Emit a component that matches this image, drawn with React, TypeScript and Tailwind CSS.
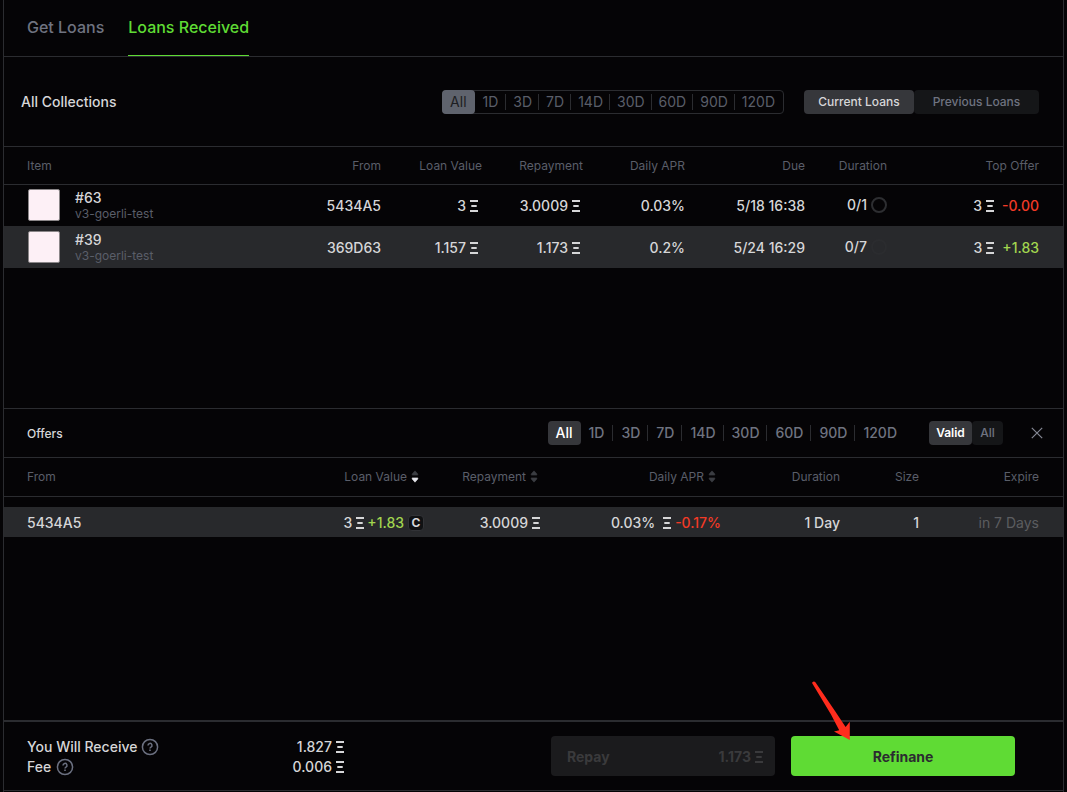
import React from 'react';
import { clsx } from 'clsx';

const PERIODS = ['All', '1D', '3D', '7D', '14D', '30D', '60D', '90D', '120D'];

function Eth() {
  return (
    <svg width="8" height="12" viewBox="0 0 8 12" fill="currentColor" role="img" aria-label="ETH" className="shrink-0">
      <path d="M0 0h8v2H0zM1.3 5h5.4v2H1.3zM0 10h8v2H0z" />
    </svg>
  );
}

function SortIcon({ desc = false }: { desc?: boolean }) {
  return (
    <svg width="8" height="13" viewBox="0 0 8 13" aria-hidden="true" className="shrink-0">
      <path d="M4 0.8 6.8 4v1.1H1.2V4z" fill="#3b3d42" stroke="#3b3d42" strokeWidth="0.6" strokeLinejoin="round" />
      <path
        d="M4 12.2 6.8 9V7.9H1.2V9z"
        fill={desc ? '#e4e4ea' : '#3b3d42'}
        stroke={desc ? '#e4e4ea' : '#3b3d42'}
        strokeWidth="0.6"
        strokeLinejoin="round"
      />
    </svg>
  );
}

function HelpIcon() {
  return (
    <svg width="18" height="18" viewBox="0 0 18 18" fill="none" stroke="#6b7080" aria-hidden="true">
      <circle cx="9" cy="9" r="7.6" strokeWidth="1.5" />
      <path d="M7 7.4a2 2 0 1 1 3 1.7c-.7.4-1 .7-1 1.4" strokeWidth="1.5" />
      <path d="M9 11.6v1.5" strokeWidth="1.6" />
    </svg>
  );
}

function Amount({ value }: { value: string }) {
  return (
    <span className="inline-flex items-center gap-1">
      {value}
      <Eth />
    </span>
  );
}

function SortHeader({ label, desc }: { label: string; desc?: boolean }) {
  return (
    <button type="button" className="inline-flex items-center gap-1">
      {label}
      <SortIcon desc={desc} />
    </button>
  );
}

function OutlinedPeriods() {
  return (
    <div role="group" aria-label="Loan period" className="flex h-6 items-center rounded border border-[#2b2c30] text-sm text-[#5a5e69]">
      {PERIODS.map((p, i) => (
        <button
          key={p}
          type="button"
          className={clsx(
            'flex items-center',
            i === 0 && '-my-px -ml-px h-6 rounded bg-[#5f636d] px-2 text-[#1d1e22]',
            i === 1 && 'h-4 pr-[7px] pl-2',
            i > 1 && 'h-4 border-l border-[#2b2c30] pl-[7px]',
            i > 1 && (p === '120D' ? 'pr-2' : 'pr-[6px]'),
          )}
        >
          {p}
        </button>
      ))}
    </div>
  );
}

function PlainPeriods() {
  return (
    <div role="group" aria-label="Offer period" className="flex h-6 items-center text-sm font-medium text-[#6f7380]">
      {PERIODS.map((p, i) => (
        <button
          key={p}
          type="button"
          className={clsx(
            'flex items-center pl-2',
            i === 0 && 'h-6 rounded bg-[#36373b] pr-2 text-white',
            i === 1 && 'h-4 pr-2',
            i > 1 && 'h-4 border-l border-[#2b2c30]',
            i > 1 && (p === '120D' ? 'pr-2' : 'pr-[7px]'),
          )}
        >
          {p}
        </button>
      ))}
    </div>
  );
}

const LOANS = [
  { id: '#63', from: '5434A5', value: '3', repay: '3.0009', apr: '0.03%', due: '5/18 16:38', dur: '0/1', top: '3', diff: '-0.00', up: false, selected: false },
  { id: '#39', from: '369D63', value: '1.157', repay: '1.173', apr: '0.2%', due: '5/24 16:29', dur: '0/7', top: '3', diff: '+1.83', up: true, selected: true },
];

function LoansTable() {
  return (
    <table className="w-full table-fixed text-right">
      <colgroup>
        <col />
        <col className="w-[100px]" />
        <col className="w-[101px]" />
        <col className="w-[101px]" />
        <col className="w-[102px]" />
        <col className="w-[120px]" />
        <col className="w-[82px]" />
        <col className="w-[176px]" />
      </colgroup>
      <thead className="border-b border-[#2b2c30] text-xs text-[#5a5e69]">
        <tr className="h-[37px] *:pt-[2px]">
          <th className="pl-[23px] text-left font-normal">Item</th>
          <th className="font-normal">From</th>
          <th className="font-normal">Loan Value</th>
          <th className="font-normal">Repayment</th>
          <th className="font-normal">Daily APR</th>
          <th className="font-normal">Due</th>
          <th className="font-normal">Duration</th>
          <th className="pr-6 font-normal">Top Offer</th>
        </tr>
      </thead>
      <tbody className="text-sm font-medium text-[#d6d6d8]">
        {LOANS.map((l) => (
          <tr key={l.id} className={clsx('h-[42px]', l.selected && 'bg-[#28292c]')}>
            <td className="pl-6 text-left">
              <div className="flex items-center gap-[15px]">
                <div className="size-8 rounded-xs border border-[#8a8688] bg-[#fdf0f6]" />
                <div className="pt-[2px]">
                  <div className="leading-4">{l.id}</div>
                  <div className="text-xs leading-4 font-normal text-[#5a5e69]">v3-goerli-test</div>
                </div>
              </div>
            </td>
            <td className="pt-[2px]">{l.from}</td>
            <td className="pt-[2px] pr-1"><Amount value={l.value} /></td>
            <td className="pt-[2px] pr-[3px]"><Amount value={l.repay} /></td>
            <td className="pt-[2px]">{l.apr}</td>
            <td className="pt-[2px]">{l.due}</td>
            <td>
              <div className="flex items-center justify-end gap-1">
                {l.dur}
                <span className={clsx('size-4 rounded-full border-2', l.selected ? 'border-[#2b2c2f]' : 'border-[#2d2e31]')} />
              </div>
            </td>
            <td className="pt-[2px] pr-6">
              <div className="flex items-center justify-end gap-2">
                <Amount value={l.top} />
                <span className={l.up ? 'text-[#a2d64f]' : 'text-[#f23a26]'}>{l.diff}</span>
              </div>
            </td>
          </tr>
        ))}
      </tbody>
    </table>
  );
}

function OffersTable() {
  return (
    <table className="w-full table-fixed text-right">
      <colgroup>
        <col />
        <col className="w-[200px]" />
        <col className="w-[116px]" />
        <col className="w-[181px]" />
        <col className="w-[119px]" />
        <col className="w-[79px]" />
        <col className="w-[144px]" />
      </colgroup>
      <thead className="border-b border-[#2b2c30] text-xs text-[#5a5e69]">
        <tr className="h-[38px]">
          <th className="pl-[23px] text-left font-normal">From</th>
          <th className="pr-[5px] font-normal"><SortHeader label="Loan Value" desc /></th>
          <th className="pr-[2px] font-normal"><SortHeader label="Repayment" /></th>
          <th className="pr-[5px] font-normal"><SortHeader label="Daily APR" /></th>
          <th className="font-normal">Duration</th>
          <th className="font-normal">Size</th>
          <th className="pr-6 font-normal">Expire</th>
        </tr>
      </thead>
      <tbody className="text-sm font-medium text-[#d6d6d8] before:block before:h-[10px] before:content-['']">
        <tr className="h-[30px] bg-[#28292c] *:pt-[2px]">
          <td className="pl-[23px] text-left">5434A5</td>
          <td>
            <div className="flex items-center justify-end gap-1">
              <span className="flex items-center gap-[3px]">
                <Amount value="3" />
                <span className="text-[#a2d64f]">+1.83</span>
              </span>
              <span className="flex size-4 items-center justify-center rounded border border-[#323337] bg-[#101113] text-xs font-bold">C</span>
            </div>
          </td>
          <td><Amount value="3.0009" /></td>
          <td>
            <div className="flex items-center justify-end gap-1">
              <span className="pr-1">0.03%</span>
              <Eth />
              <span className="text-[#f23a26]">-0.17%</span>
            </div>
          </td>
          <td>1 Day</td>
          <td>1</td>
          <td className="pr-6 font-normal text-[#5c5d60]">in 7 Days</td>
        </tr>
      </tbody>
    </table>
  );
}

export default function App() {
  return (
    <div className="min-h-screen bg-[#050406] px-[3px] font-['Inter','Liberation_Sans',sans-serif]">
      <main className="flex min-h-screen flex-col border-x border-[#2b2c30]">
        <nav className="flex gap-6 border-b border-[#2b2c30] px-[23px] text-base font-medium">
          <a href="#get" className="flex h-14 items-center pb-[2px] text-[#6f7380]">Get Loans</a>
          <a href="#received" aria-current="page" className="flex h-14 items-center border-b border-[#5fdb34] pb-px text-[#5fdb34]">
            Loans Received
          </a>
        </nav>

        <section className="min-h-[351px]">
          <div className="flex h-[90px] items-center border-b border-[#2b2c30] pr-6 pl-[17px]">
            <h2 className="grow text-sm font-medium text-[#d6d6d8]">All Collections</h2>
            <OutlinedPeriods />
            <div role="group" aria-label="Loan status" className="ml-5 flex text-xs font-medium">
              <button type="button" className="h-6 w-[110px] rounded bg-[#36373b] text-[#d6d6d8]">Current Loans</button>
              <button type="button" className="h-6 w-[125px] rounded bg-[#151618] text-[#6f7380]">Previous Loans</button>
            </div>
          </div>
          <LoansTable />
        </section>

        <section className="grow border-t border-[#2b2c30]">
          <div className="flex h-[49px] items-center border-b border-[#2b2c30] pr-5 pl-[23px]">
            <h2 className="grow pt-[2px] text-xs font-medium text-[#d6d6d8]">Offers</h2>
            <PlainPeriods />
            <div role="group" aria-label="Offer status" className="ml-6 flex text-xs">
              <button type="button" className="h-6 w-[43px] rounded bg-[#36373b] font-semibold text-white">Valid</button>
              <button type="button" className="h-6 w-[31px] rounded bg-[#151618] font-medium text-[#6f7380]">All</button>
            </div>
            <button type="button" aria-label="Close offers" className="ml-7 text-[#858894]">
              <svg width="12" height="12" viewBox="0 0 12 12" stroke="currentColor" strokeWidth="1.2" aria-hidden="true">
                <path d="M.8.8l10.4 10.4M11.2.8.8 11.2" />
              </svg>
            </button>
          </div>
          <OffersTable />
        </section>

        <footer className="mb-px flex h-[71px] items-center border-t-2 border-b border-[#2b2c30] pr-12 pl-[23px]">
          <dl className="grow pt-[2px] text-sm leading-5 font-medium text-[#d6d6d8]">
            <div className="flex w-[317px] items-center justify-between">
              <dt className="flex items-center gap-1">You Will Receive <HelpIcon /></dt>
              <dd><Amount value="1.827" /></dd>
            </div>
            <div className="flex w-[317px] items-center justify-between">
              <dt className="flex items-center gap-[5px]">Fee <HelpIcon /></dt>
              <dd><Amount value="0.006" /></dd>
            </div>
          </dl>
          <div className="flex gap-4 text-sm font-bold">
            <button type="button" disabled className="flex h-10 w-56 items-center justify-between rounded bg-[#1b1b1d] pt-[2px] pr-3 pl-4 text-[#3a3a3c]">
              <span>Repay</span>
              <Amount value="1.173" />
            </button>
            <div className="relative">
              <button type="button" className="h-10 w-56 rounded bg-[#5fdb34] pt-[2px] text-[#2b2c30]">Refinane</button>
              <svg width="42" height="62" viewBox="0 0 42 62" fill="#ff2c1d" aria-hidden="true" className="pointer-events-none absolute -top-14 left-5">
                <path d="M1.2 3.2C1 1.7 3.2.8 4.4 2.2L24 31l10.6 16 4.2-5.2v18.2L23 51.6l5.2-1.3L20 34.5z" />
              </svg>
            </div>
          </div>
        </footer>
      </main>
    </div>
  );
}
